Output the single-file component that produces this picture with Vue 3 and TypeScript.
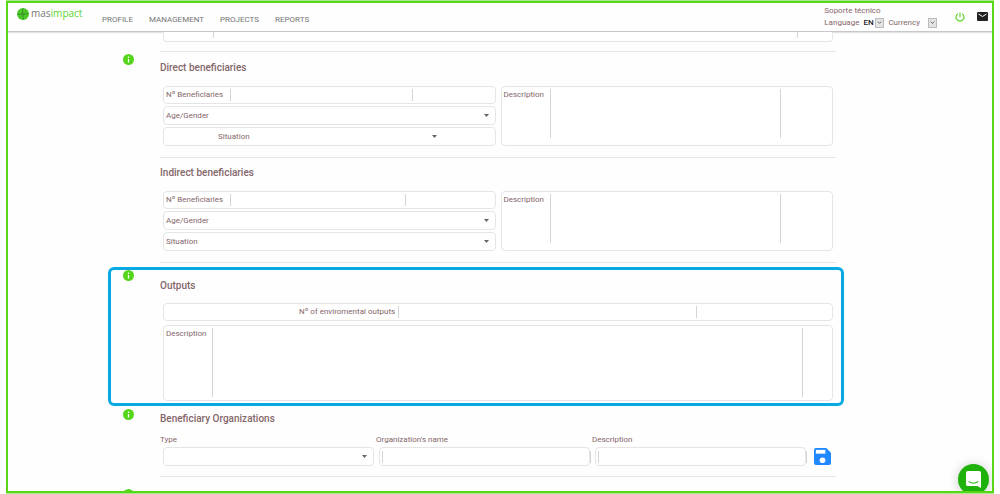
<script setup lang="ts">
interface Group {
  id: string
  title: string
  info: boolean
  countClass: string
  centered: boolean
}

const links: string[] = ['PROFILE', 'MANAGEMENT', 'PROJECTS', 'REPORTS']

const groups: Group[] = [
  { id: 'direct', title: 'Direct beneficiaries', info: true, countClass: 'count-wide', centered: true },
  { id: 'indirect', title: 'Indirect beneficiaries', info: false, countClass: 'count-narrow', centered: false },
]
</script>

<template>
  <div class="shell">
    <header class="topbar">
      <a class="brand" href="#" aria-label="masimpact">
        <svg class="brand-mark" viewBox="0 0 24 24" aria-hidden="true">
          <circle cx="12" cy="12" r="12" fill="#4fc92a" />
          <path d="M12 1c-3 6 2 15 0 22M1 13c7-3 14 1 22-2" fill="none" stroke="#2b7d25" stroke-width="1.6" />
          <path d="M12 12 20 4M12 12 5 20" stroke="#3aa528" stroke-width="1" />
        </svg>
        <span class="brand-name">mas<span class="brand-accent">impact</span></span>
      </a>
      <nav class="nav">
        <a v-for="link in links" :key="link" href="#">{{ link }}</a>
      </nav>
      <div class="tools">
        <div class="prefs">
          <a class="support" href="#">Soporte técnico</a>
          <div class="pref-row">
            <label for="language">Language</label>
            <span class="mini">
              <select id="language" class="mini-select"><option>EN</option></select>
              <span class="mini-arrow"><svg viewBox="0 0 8 8" aria-hidden="true"><path d="m2 3 2 2 2-2" /></svg></span>
            </span>
            <label for="currency">Currency</label>
            <span class="mini">
              <select id="currency" class="mini-select mini-empty"><option></option></select>
              <span class="mini-arrow"><svg viewBox="0 0 8 8" aria-hidden="true"><path d="m2 3 2 2 2-2" /></svg></span>
            </span>
          </div>
        </div>
        <button class="icon-button" type="button" aria-label="Log out">
          <svg class="power" viewBox="0 0 20 20" aria-hidden="true">
            <path d="M10 1v9M5.5 3.5a8 8 0 1 0 9 0" fill="none" stroke="#5bd62a" stroke-width="2.4" />
          </svg>
        </button>
        <button class="icon-button" type="button" aria-label="Messages">
          <svg class="mail" viewBox="0 0 22 18" aria-hidden="true">
            <rect width="22" height="18" rx="2" fill="#202020" />
            <path d="m3 4 8 5 8-5" fill="none" stroke="#fff" stroke-width="2" />
          </svg>
        </button>
      </div>
    </header>

    <main class="page">
      <section class="section previous">
        <div class="body">
          <div class="field area-field">
            <textarea class="entry area" aria-label="Previous description"></textarea>
          </div>
        </div>
      </section>

      <section v-for="group in groups" :key="group.id" class="section group">
        <button v-if="group.info" class="info" type="button" :aria-label="'About ' + group.title">
          <svg viewBox="0 0 22 22" aria-hidden="true">
            <circle cx="11" cy="11" r="11" fill="#55d51c" />
            <path d="M11 5v3M11 10v7" stroke="#fff" stroke-width="2.4" />
          </svg>
        </button>
        <div class="body">
          <h2>{{ group.title }}</h2>
          <div class="pair">
            <div class="stack">
              <div class="field">
                <label :for="group.id + '-count'">Nº Beneficiaries</label>
                <input :id="group.id + '-count'" class="entry" :class="group.countClass" type="text" />
              </div>
              <div class="field choice">
                <select aria-label="Age/Gender"><option>Age/Gender</option></select>
                <svg class="caret" viewBox="0 0 10 6" aria-hidden="true"><path d="M0 0h10L5 6z" /></svg>
              </div>
              <div class="field choice" :class="{ centered: group.centered }">
                <select aria-label="Situation"><option>Situation</option></select>
                <svg class="caret" viewBox="0 0 10 6" aria-hidden="true"><path d="M0 0h10L5 6z" /></svg>
              </div>
            </div>
            <div class="field area-field">
              <label :for="group.id + '-text'">Description</label>
              <textarea :id="group.id + '-text'" class="entry area"></textarea>
            </div>
          </div>
        </div>
      </section>

      <div class="rule"></div>

      <section class="section outputs">
        <button class="info" type="button" aria-label="About Outputs">
          <svg viewBox="0 0 22 22" aria-hidden="true">
            <circle cx="11" cy="11" r="11" fill="#55d51c" />
            <path d="M11 5v3M11 10v7" stroke="#fff" stroke-width="2.4" />
          </svg>
        </button>
        <div class="body">
          <h2>Outputs</h2>
          <div class="field output-count">
            <label for="output-count">Nº of enviromental outputs</label>
            <input id="output-count" class="entry" type="text" />
          </div>
          <div class="field area-field output-text">
            <label for="output-text">Description</label>
            <textarea id="output-text" class="entry area"></textarea>
          </div>
        </div>
      </section>

      <section class="section organizations">
        <button class="info" type="button" aria-label="About Beneficiary Organizations">
          <svg viewBox="0 0 22 22" aria-hidden="true">
            <circle cx="11" cy="11" r="11" fill="#55d51c" />
            <path d="M11 5v3M11 10v7" stroke="#fff" stroke-width="2.4" />
          </svg>
        </button>
        <div class="body">
          <h2>Beneficiary Organizations</h2>
          <form class="org-row" @submit.prevent>
            <div class="org-cell">
              <label for="org-type">Type</label>
              <div class="field choice">
                <select id="org-type"><option></option></select>
                <svg class="caret" viewBox="0 0 10 6" aria-hidden="true"><path d="M0 0h10L5 6z" /></svg>
              </div>
            </div>
            <div class="org-cell">
              <label for="org-name">Organization's name</label>
              <div class="field plain"><input id="org-name" class="entry" type="text" /></div>
            </div>
            <div class="org-cell">
              <label for="org-text">Description</label>
              <div class="field plain"><input id="org-text" class="entry" type="text" /></div>
            </div>
            <button class="save" type="submit" aria-label="Save">
              <svg viewBox="0 0 18 18" aria-hidden="true">
                <path d="M2 0h11l5 5v11a2 2 0 0 1-2 2H2a2 2 0 0 1-2-2V2a2 2 0 0 1 2-2z" fill="#2189ff" />
                <path d="M2 2h10v4H2z" fill="#fff" />
                <circle cx="9" cy="13" r="3" fill="#fff" />
              </svg>
            </button>
          </form>
        </div>
      </section>

      <section class="section next">
        <button class="info" type="button" aria-label="More information">
          <svg viewBox="0 0 22 22" aria-hidden="true"><circle cx="11" cy="11" r="11" fill="#55d51c" /></svg>
        </button>
      </section>
    </main>

    <button class="chat" type="button" aria-label="Open chat">
      <svg viewBox="0 0 16 18" aria-hidden="true">
        <path d="M2 0h12a2 2 0 0 1 2 2v16l-4-2H2a2 2 0 0 1-2-2V2a2 2 0 0 1 2-2z" fill="#fff" />
        <path d="M3 11q5 4 10 0" fill="none" stroke="#20b20c" stroke-width="1.2" />
      </svg>
    </button>
  </div>
</template>

<style>
body {
  background: #fff;
}
</style>

<style scoped>
* {
  box-sizing: border-box;
}

.shell {
  position: relative;
  display: flex;
  flex-direction: column;
  height: calc(100vh - 2px);
  margin: 1px 6px;
  overflow: hidden;
  border: 2px solid #58d61c;
  box-shadow: 0 1px #a9eb8b, 0 -1px #a9eb8b;
  background: #fefefe;
  color: #84666a;
  font: 8px/12px Roboto, "Liberation Sans", sans-serif;
}

a {
  color: inherit;
  text-decoration: none;
}

button {
  padding: 0;
  border: 0;
  background: none;
  cursor: pointer;
}

svg {
  display: block;
}

input,
select,
textarea {
  min-width: 0;
  margin: 0;
  padding: 0;
  border: 0;
  border-radius: 0;
  outline: 0;
  background: transparent;
  color: inherit;
  font: inherit;
  appearance: none;
  resize: none;
}

.topbar {
  display: flex;
  flex: none;
  height: 29px;
  padding: 0 4px 0 9px;
  border-bottom: 1px solid #c8c8c8;
  box-shadow: 0 1px 1px #e2e2e2;
}

.brand {
  display: flex;
  align-items: center;
  gap: 2px;
  width: 85px;
  height: 21px;
}

.brand-mark {
  width: 12px;
  height: 12px;
}

.brand-name {
  margin-bottom: 1px;
  color: #777;
  font: 10px/12px "Open Sans", sans-serif;
}

.brand-accent {
  color: #5bd62a;
}

.nav {
  display: flex;
  flex: 1;
  gap: 16px;
  padding-top: 11px;
  color: #757575;
}

.tools {
  display: flex;
  align-items: flex-start;
}

.prefs {
  margin-right: 18px;
}

.support {
  display: block;
  margin-top: 2px;
}

.pref-row {
  display: flex;
  align-items: center;
  gap: 4px;
}

.mini {
  display: flex;
  align-items: center;
  gap: 1px;
}

.mini-select {
  width: 11px;
  color: #222;
  font-weight: 500;
}

.mini-empty {
  width: 3px;
}

.mini-arrow {
  width: 9px;
  height: 10px;
  border: 1px solid #bbb;
  background: #e4e4e4;
}

.mini-arrow path {
  fill: none;
  stroke: #555;
}

.icon-button {
  margin-top: 9px;
}

.power {
  width: 10px;
  height: 10px;
}

.mail {
  width: 11px;
  height: 9px;
  margin-left: 12px;
}

.page {
  flex: 1;
  min-height: 0;
  padding: 0 148px 0 100px;
  overflow: hidden;
}

.section {
  display: flex;
  padding: 0 8px 0 15px;
}

.info {
  align-self: flex-start;
  width: 11px;
  height: 11px;
  margin-top: 2px;
}

.body {
  flex: 1;
  min-width: 0;
  margin-left: 37px;
}

.info + .body {
  margin-left: 26px;
}

.rule,
.previous .body::after,
.organizations .body::after {
  display: block;
  height: 1px;
  background: #e6e6e6;
  content: "";
}

h2 {
  margin: 0;
  font-size: 10px;
  font-weight: 500;
  line-height: 12px;
}

.field {
  display: flex;
  align-items: center;
  height: 18px;
  padding: 0 2px;
  border: 1px solid #e5e5e5;
  border-radius: 4px;
  background: #fff;
}

.entry {
  height: 12px;
  border: solid #d4d4d4;
  border-width: 0 1px;
}

.choice {
  height: 19px;
  padding-right: 6px;
}

.choice select {
  flex: 1;
}

.choice.centered {
  padding: 0 58px 0 54px;
}

.caret {
  width: 5px;
  height: 3px;
  fill: #666;
  pointer-events: none;
}

.area-field {
  align-items: flex-start;
  height: auto;
  padding-top: 2px;
}

.area-field label {
  width: 46px;
}

.previous .area-field {
  height: 10px;
  margin: 0 3px 9px;
  padding: 0 3px 0 49px;
  border-top: 0;
  border-radius: 0 0 4px 4px;
}

.previous .area {
  width: 95%;
  height: 6px;
}

.group {
  height: 105px;
}

.group .body {
  padding-top: 10px;
}

.group + .group .body {
  padding-top: 9px;
  border-top: 1px solid #e6e6e6;
}

.pair {
  display: grid;
  grid-template-columns: 1fr 1fr;
  gap: 5px;
  margin: 12px 3px 0;
}

.stack {
  display: grid;
  gap: 2px;
}

.group .stack label {
  width: 64px;
}

.count-wide {
  width: 56%;
}

.count-narrow {
  width: 54%;
}

.group .area {
  width: 71%;
  height: 49px;
}

.rule {
  margin: 0 8px 0 52px;
}

.outputs {
  margin-top: 4px;
  height: 139px;
  padding: 0 5px 0 12px;
  border: 3px solid #08a9e0;
  border-radius: 6px;
}

.outputs .info {
  margin-top: 0;
}

.outputs h2 {
  margin: 10px 0 11px;
}

.output-count {
  justify-content: center;
  gap: 3px;
  margin: 0 3px 4px;
}

.output-count .entry {
  width: 45%;
}

.output-text {
  height: 76px;
  margin: 0 3px;
}

.output-text .area {
  width: 89%;
  height: 69px;
}

.organizations .info {
  margin-top: 3px;
}

.organizations h2 {
  margin: 7px 0 9px;
}

.org-row {
  display: grid;
  grid-template-columns: 1fr 1fr 1fr 28px;
  align-items: end;
  margin-bottom: 10px;
}

.org-cell label {
  display: block;
}

.org-cell .field {
  margin: 1px 2px 0 3px;
  height: 19px;
}

.plain .entry {
  flex: 1;
  margin-right: -4px;
}

.save {
  justify-self: center;
  padding-bottom: 1px;
}

.save svg {
  width: 17px;
  height: 17px;
}

.next .info {
  margin-top: 12px;
}

.chat {
  position: absolute;
  right: 3px;
  bottom: -4px;
  display: grid;
  place-items: center;
  width: 31px;
  height: 31px;
  border-radius: 50%;
  background: #20b20c;
  box-shadow: 0 1px 12px rgba(0, 0, 0, 0.2);
}

.chat svg {
  width: 15px;
  height: 17px;
}
</style>
